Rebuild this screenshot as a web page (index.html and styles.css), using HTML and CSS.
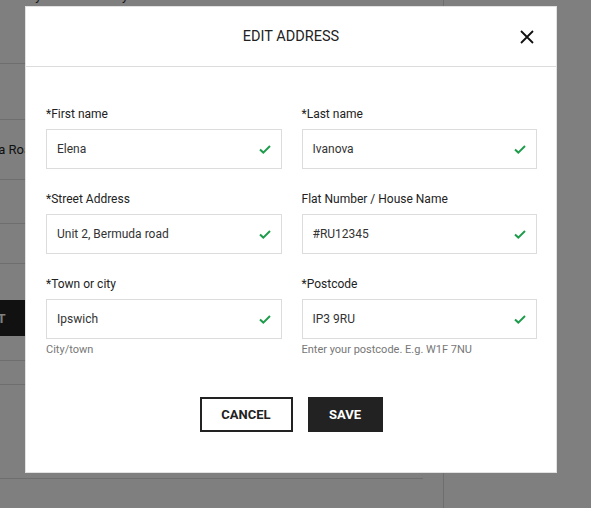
FILE: index.html
```html
<!DOCTYPE html>
<html lang="en">
<head>
  <meta charset="UTF-8">
  <title>Edit Address</title>
  <link rel="stylesheet" href="styles.css">
</head>
<body>

<div class="page">
  <div class="main">
    <div class="list">
      <div class="list-head">
        <span class="crumb">My</span>
        <span class="crumb crumb-second">Delivery</span>
      </div>
      <div class="row row-a"></div>
      <div class="row row-b"><span class="row-text">Bermuda Road</span></div>
      <div class="row row-c"></div>
      <div class="row row-d"></div>
      <div class="row row-e"><button class="bg-btn">EDIT</button></div>
      <div class="row row-f"></div>
      <div class="row row-g"></div>
    </div>
  </div>
  <div class="side"></div>
</div>

<div class="overlay">
  <div class="modal">
    <div class="modal-header">
      <span></span>
      <h2 class="modal-title">EDIT ADDRESS</h2>
      <button class="close" aria-label="Close">
        <svg width="14" height="14" viewBox="0 0 14 14">
          <path d="M1 1 L13 13 M13 1 L1 13" stroke="#111" stroke-width="1.8" fill="none"/>
        </svg>
      </button>
    </div>

    <form class="form">
      <div class="field">
        <label>*First name</label>
        <div class="control">
          <input type="text" value="Elena">
          <svg class="tick" width="12" height="9" viewBox="0 0 12 9"><path d="M1 4.5 L4.3 7.6 L11 1" stroke="#1e9c4c" stroke-width="2" fill="none"/></svg>
        </div>
      </div>
      <div class="field">
        <label>*Last name</label>
        <div class="control">
          <input type="text" value="Ivanova">
          <svg class="tick" width="12" height="9" viewBox="0 0 12 9"><path d="M1 4.5 L4.3 7.6 L11 1" stroke="#1e9c4c" stroke-width="2" fill="none"/></svg>
        </div>
      </div>
      <div class="field">
        <label>*Street Address</label>
        <div class="control">
          <input type="text" value="Unit 2, Bermuda road">
          <svg class="tick" width="12" height="9" viewBox="0 0 12 9"><path d="M1 4.5 L4.3 7.6 L11 1" stroke="#1e9c4c" stroke-width="2" fill="none"/></svg>
        </div>
      </div>
      <div class="field">
        <label>Flat Number / House Name</label>
        <div class="control">
          <input type="text" value="#RU12345">
          <svg class="tick" width="12" height="9" viewBox="0 0 12 9"><path d="M1 4.5 L4.3 7.6 L11 1" stroke="#1e9c4c" stroke-width="2" fill="none"/></svg>
        </div>
      </div>
      <div class="field">
        <label>*Town or city</label>
        <div class="control">
          <input type="text" value="Ipswich">
          <svg class="tick" width="12" height="9" viewBox="0 0 12 9"><path d="M1 4.5 L4.3 7.6 L11 1" stroke="#1e9c4c" stroke-width="2" fill="none"/></svg>
        </div>
        <div class="hint">City/town</div>
      </div>
      <div class="field">
        <label>*Postcode</label>
        <div class="control">
          <input type="text" value="IP3 9RU">
          <svg class="tick" width="12" height="9" viewBox="0 0 12 9"><path d="M1 4.5 L4.3 7.6 L11 1" stroke="#1e9c4c" stroke-width="2" fill="none"/></svg>
        </div>
        <div class="hint">Enter your postcode. E.g. W1F 7NU</div>
      </div>
    </form>

    <div class="actions">
      <button class="btn btn-outline">CANCEL</button>
      <button class="btn btn-dark">SAVE</button>
    </div>
  </div>
</div>

</body>
</html>
```

FILE: styles.css
```css
body {
  margin: 0;
  font-family: Roboto, "Liberation Sans", sans-serif;
  color: #222;
  background: #fff;
  overflow: hidden;
}

/* page behind the dialog */
.page {
  display: flex;
  height: 100vh;
}

.main {
  width: 443px;
  border-right: 1px solid #dcdcdc;
}

.list {
  width: 423px;
}

.list-head {
  height: 75px;
  border-bottom: 1px solid #dcdcdc;
  font-size: 13px;
  line-height: 16px;
  margin-top: -12px;
}

.crumb {
  margin-left: 24px;
}

.crumb-second {
  margin-left: 38px;
}

.row {
  border-bottom: 1px solid #dcdcdc;
  display: flex;
  align-items: center;
}

.row-a { height: 55px; }
.row-b { height: 59px; }
.row-c { height: 43px; }
.row-d { height: 39px; }
.row-e { height: 96px; align-items: flex-start; }
.row-f { height: 23px; }
.row-g { height: 93px; }

.row-text {
  font-size: 13px;
  color: #222;
  margin-left: -47px;
}

.bg-btn {
  margin: 36px 0 0 -42px;
  height: 36px;
  padding: 0 30px 0 20px;
  border: none;
  background: #222;
  color: #fff;
  font-family: Roboto, sans-serif;
  font-weight: 700;
  font-size: 13px;
}

.overlay {
  position: fixed;
  top: 0;
  left: 0;
  right: 0;
  bottom: 0;
  background: rgba(0, 0, 0, 0.5);
}

/* dialog */
.modal {
  width: 532px;
  margin: 6px 0 0 25px;
  background: #fff;
  border: 1px solid #e2e2e2;
  box-sizing: border-box;
}

.modal-header {
  display: grid;
  grid-template-columns: 1fr auto 1fr;
  align-items: center;
  height: 59px;
  border-bottom: 1px solid #dcdcdc;
}

.modal-title {
  margin: 0;
  font-size: 14.5px;
  font-weight: 400;
  color: #222;
}

.close {
  justify-self: end;
  margin-right: 22px;
  padding: 0;
  border: none;
  background: none;
  width: 14px;
  height: 14px;
  display: flex;
}

.form {
  display: grid;
  grid-template-columns: 1fr 1fr;
  column-gap: 20px;
  row-gap: 23px;
  padding: 40px 19px 0 20px;
}

.field label {
  display: block;
  font-size: 12px;
  line-height: 15px;
  color: #222;
  margin-bottom: 7px;
}

.control {
  display: flex;
  align-items: center;
  height: 40px;
  border: 1px solid #dcdcdc;
  box-sizing: border-box;
  padding: 0 10px 0 10px;
}

.control input {
  flex: 1;
  min-width: 0;
  border: none;
  outline: none;
  padding: 0;
  font-family: Roboto, sans-serif;
  font-size: 12px;
  color: #333;
  background: none;
}

.tick {
  flex: none;
}

.hint {
  font-size: 11px;
  line-height: 13px;
  color: #777;
  margin-top: 4px;
}

.actions {
  display: flex;
  justify-content: center;
  gap: 15px;
  padding: 41px 0 40px;
}

.btn {
  height: 35px;
  font-family: Roboto, sans-serif;
  font-weight: 700;
  font-size: 13px;
  box-sizing: border-box;
  cursor: pointer;
}

.btn-outline {
  width: 93px;
  background: #fff;
  color: #222;
  border: 2px solid #222;
}

.btn-dark {
  width: 75px;
  background: #222;
  color: #fff;
  border: none;
}
```
